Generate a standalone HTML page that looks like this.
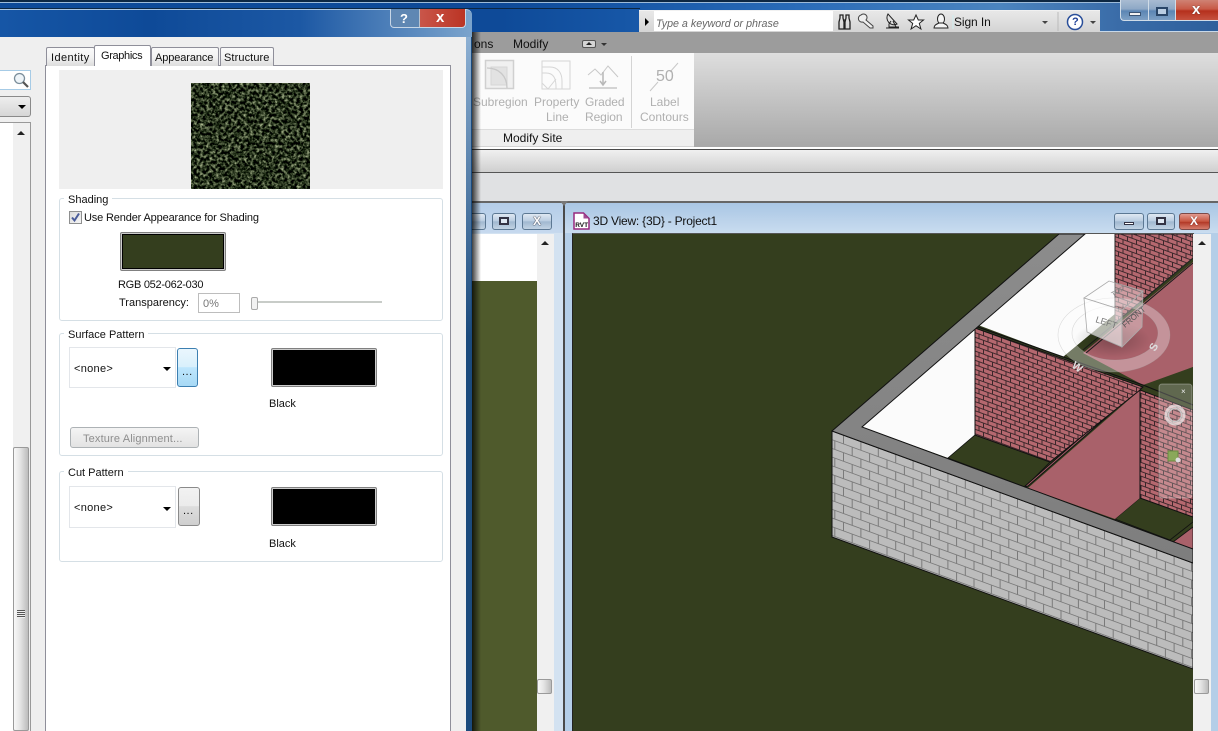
<!DOCTYPE html>
<html><head><meta charset="utf-8"><title>3D View</title>
<style>
html,body{margin:0;padding:0}
body{width:1218px;height:731px;overflow:hidden;position:relative;background:#e0e1e3;font:11px/14px "Liberation Sans",sans-serif;color:#111}
.a{position:absolute;box-sizing:border-box}
.t{position:absolute;white-space:nowrap;line-height:14px}
.g{position:absolute;box-sizing:border-box;left:59px;width:384px;border:1px solid #d5dfe5;border-radius:3px}
.lg{position:absolute;background:#fff;padding:0 4px 0 4px;white-space:nowrap;line-height:14px}
.sw{position:absolute;box-sizing:border-box;width:106px;height:39px;border:1px solid #808080;border-radius:2px;background:#ccc}
.sw i{position:absolute;box-sizing:border-box;left:1px;top:1px;right:1px;bottom:1px;display:block;border:1px solid #000}
.cb{position:absolute;box-sizing:border-box;width:107px;background:#fff;border:1px solid #e3e6ea}
.arr{position:absolute;width:0;height:0;border-left:4px solid transparent;border-right:4px solid transparent;border-top:4px solid #000}
.up{position:absolute;width:0;height:0;border-left:4px solid transparent;border-right:4px solid transparent;border-bottom:4px solid #222}
.thumb{position:absolute;box-sizing:border-box;border:1px solid #9a9a9a;border-radius:2px;background:linear-gradient(90deg,#f8f8f8,#e4e4e4 45%,#bcbcbc)}
.wb{position:absolute;box-sizing:border-box;height:17px;border:1px solid #5c7893;border-radius:3px;background:linear-gradient(#dfe8f2,#b9cce0 48%,#9fb7cf 50%,#c2d3e4)}
.wb.c{background:linear-gradient(#e39a8e,#c6543f 50%,#b33a28 55%,#d57c6c);border-color:#7c4a48}
.dis{color:#b0b0b0}
</style></head><body>

<!-- main title bar -->
<div class="a" style="left:0;top:0;width:1218px;height:2px;background:#0d2742"></div>
<div class="a" style="left:0;top:2px;width:1218px;height:1px;background:#9dbbd9"></div>
<div class="a" style="left:0;top:3px;width:1218px;height:29px;background:linear-gradient(90deg,#0e4a98 0,#0e4a98 500px,#1656a6 620px,#2a6cb8 800px,#4b84bf 1000px,#3a6ca8 1120px,#2e5f9c 1218px)"></div>
<div class="a" style="left:0;top:8px;width:640px;height:1px;background:#0d2742"></div>
<div class="a" style="left:1100px;top:31px;width:118px;height:1px;background:#c8d8e8"></div>

<!-- window buttons -->
<div class="a" style="left:1120px;top:0;width:98px;height:21px;border-left:1px solid #d0dce8;border-bottom:1px solid #d0dce8;border-radius:0 0 0 4px;background:linear-gradient(#a8bbd2,#8ea8c6 45%,#5b86b4 55%,#7ea0c4)"></div>
<div class="a" style="left:1148px;top:0;width:1px;height:20px;background:#d0dce8"></div>
<div class="a" style="left:1175px;top:0;width:1px;height:20px;background:#d0dce8"></div>
<div class="a" style="left:1176px;top:0;width:42px;height:21px;border-bottom:1px solid #d0dce8;background:linear-gradient(#cf8274,#c85a47 45%,#b5301d 55%,#c6523f)"></div>
<div class="a" style="left:1129px;top:12px;width:12px;height:4px;background:#f2f2f2;border:1px solid #3a5474"></div>
<div class="a" style="left:1156px;top:7px;width:12px;height:9px;background:#b9cde2;border:2px solid #2a4668"></div>
<div class="t" style="left:1192px;top:2px;font:bold 15px/16px 'Liberation Sans',sans-serif;color:#fff;text-shadow:0 0 1px #333">x</div>

<!-- search bar -->
<div class="a" style="left:639px;top:10px;width:461px;height:22px;background:linear-gradient(#e8e8e8,#d4d4d4);border-top:1px solid #f1f1f1"></div>
<div class="a" style="left:654px;top:11px;width:179px;height:20px;background:#fff"></div>
<div class="a" style="left:645px;top:18px;width:0;height:0;border-left:4px solid #000;border-top:4px solid transparent;border-bottom:4px solid transparent"></div>
<div class="t" style="left:656px;top:17px;font-style:italic;color:#666;font-size:10.7px">Type a keyword or phrase</div>
<svg class="a" style="left:836px;top:10px" width="270" height="22" viewBox="0 0 270 22" fill="none" stroke="#222" stroke-width="1">
 <path d="M4 5h3v3l1 4v7h-5v-7l1-4zM10 5h3v3l1 4v7h-5v-7l1-4zM8 10h1" stroke-width="1.300"/>
 <path d="M25 5a3.500 3.500 0 1 1 5 5l7 6v2h-3l-7-6a3.500 3.500 0 0 1-2-7z" stroke="#444" fill="#eee"/>
 <path d="M52 4a7 7 0 0 0 9 10zM55 11l-2 3v3h10M57 11l3 6M50 18h13"/>
 <path d="M80 5l2.300 5h5.200l-4.200 3.400 1.600 5.600-4.900-3.300-4.900 3.300 1.600-5.600-4.200-3.400h5.200z" fill="#fff"/>
 <ellipse cx="105" cy="9" rx="3.500" ry="5" fill="#f4f4f4"/><path d="M98 18c0-3 3-4 5-5h4c2 1 5 2 5 5z" fill="#f4f4f4"/>
 <path d="M117 5v14" stroke="#cfeef0"/>
 <path d="M222 2v19" stroke="#bbb"/>
 <circle cx="239" cy="12" r="7.500" stroke="#2a4f9a" stroke-width="1.500" fill="#fff"/>
</svg>
<div class="t" style="left:1072px;top:15px;font:bold 11px/14px 'Liberation Sans',sans-serif;color:#1d3f96">?</div>
<div class="t" style="left:954px;top:15px;font-size:12px;letter-spacing:-.1px">Sign In</div>
<div class="a" style="left:1042px;top:21px;border-left:3px solid transparent;border-right:3px solid transparent;border-top:3px solid #444;width:0;height:0"></div>
<div class="a" style="left:1090px;top:21px;border-left:3px solid transparent;border-right:3px solid transparent;border-top:3px solid #444;width:0;height:0"></div>

<!-- ribbon -->
<div class="a" style="left:472px;top:32px;width:746px;height:21px;background:#9c9c9c"></div>
<div class="t" style="left:474px;top:37px;font-size:12px">ons</div>
<div class="t" style="left:513px;top:37px;font-size:12px">Modify</div>
<div class="a" style="left:582px;top:40px;width:14px;height:8px;background:#d5d5d5;border:1px solid #555;border-radius:2px"></div>
<div class="a" style="left:586px;top:42px;width:0;height:0;border-left:3px solid transparent;border-right:3px solid transparent;border-bottom:3px solid #222"></div>
<div class="a" style="left:601px;top:43px;width:0;height:0;border-left:3px solid transparent;border-right:3px solid transparent;border-top:3px solid #333"></div>

<div class="a" style="left:472px;top:53px;width:222px;height:76px;background:#fbfbfb"></div>
<div class="a" style="left:472px;top:129px;width:222px;height:18px;background:#efefef;border-top:1px solid #dcdcdc;border-bottom:1px solid #d4d4d4"></div>
<div class="a" style="left:694px;top:53px;width:524px;height:94px;background:linear-gradient(#dedede,#a8a8a8)"></div>
<div class="a" style="left:631px;top:56px;width:1px;height:72px;background:#d4d4d4"></div>
<svg class="a" style="left:472px;top:53px" width="222" height="76" viewBox="0 0 222 76" fill="none" stroke="#d6d6d6" stroke-width="1">
 <rect x="13.500" y="7.500" width="28" height="28" fill="#f0f0f0" stroke="#d0d0d0" stroke-width="1.500"/>
 <path d="M19 14h16v18h-16z" fill="#e2e2e2"/><path d="M15 15c12 0 20 8 20 20" stroke="#c8c8c8" stroke-width="1.300"/>
 <path d="M70 8h28v28h-28zM70 14h8c8 0 12 6 12 14v8M70 20h4c8 0 10 6 10 14v2M70 30l6 6l8-10"/>
 <path d="M116 22l7-6 6 6 7-9 10 11" stroke="#c8c8c8"/><path d="M131 19v12M128 28l3 4 3-4" stroke="#b8b8b8" stroke-width="1.500"/><path d="M117 35h28" stroke="#d4d4d4" stroke-width="2"/>
 <path d="M178 38l8-9M198 19l8-9" stroke="#c8c8c8"/>
</svg>
<div class="t dis" style="left:656px;top:68px;font-size:16px;line-height:18px">50</div>
<div class="t dis" style="left:473px;top:95px;font-size:12px">Subregion</div>
<div class="t dis" style="left:534px;top:95px;font-size:12px">Property</div>
<div class="t dis" style="left:546px;top:110px;font-size:12px">Line</div>
<div class="t dis" style="left:585px;top:95px;font-size:12px;letter-spacing:-.1px">Graded</div>
<div class="t dis" style="left:585px;top:110px;font-size:12px;letter-spacing:-.1px">Region</div>
<div class="t dis" style="left:650px;top:95px;font-size:12px">Label</div>
<div class="t dis" style="left:640px;top:110px;font-size:12px">Contours</div>
<div class="t" style="left:503px;top:131px;font-size:12px">Modify Site</div>

<div class="a" style="left:472px;top:147px;width:746px;height:2px;background:#fff"></div>
<div class="a" style="left:472px;top:149px;width:746px;height:1px;background:#4a4a4a"></div>
<div class="a" style="left:472px;top:150px;width:746px;height:22px;background:linear-gradient(#f0f0f0,#cfcfcf)"></div>
<div class="a" style="left:472px;top:172px;width:746px;height:1px;background:#555"></div>
<div class="a" style="left:472px;top:173px;width:746px;height:28px;background:#e0e1e3"></div>
<div class="a" style="left:472px;top:201px;width:746px;height:2px;background:#666"></div>

<!-- left view window -->
<div class="a" style="left:472px;top:203px;width:91px;height:528px;background:linear-gradient(#b4cde8,#c6d9ee 30px,#d3e2f1 30px)"></div>
<div class="a" style="left:472px;top:234px;width:65px;height:47px;background:#fff"></div>
<div class="a" style="left:472px;top:281px;width:65px;height:450px;background:#4f5a2c"></div>
<div class="a" style="left:537px;top:234px;width:17px;height:497px;background:#f0f0f0"></div>
<div class="up" style="left:541px;top:241px"></div>
<div class="thumb" style="left:537px;top:679px;width:15px;height:15px"></div>
<div class="wb" style="left:472px;top:213px;width:14px;border-left:0;border-radius:0 3px 3px 0"></div>
<div class="wb" style="left:492px;top:213px;width:24px"></div>
<div class="a" style="left:499px;top:217px;width:10px;height:8px;border:2px solid #334;background:#dfe8f2"></div>
<div class="wb" style="left:522px;top:213px;width:30px"></div>
<div class="t" style="left:533px;top:214px;font-size:12px;font-weight:bold;color:#fff;text-shadow:0 0 1px #223,0 0 1px #223">X</div>

<!-- 3D window frame -->
<div class="a" style="left:563px;top:203px;width:655px;height:528px;background:#b4cee8"></div>
<div class="a" style="left:563px;top:203px;width:655px;height:30px;background:linear-gradient(#a9c6e4,#c9dcef)"></div>
<div class="a" style="left:563px;top:203px;width:2px;height:528px;background:#4a4a4a"></div>
<div class="a" style="left:560px;top:201px;width:0;height:0;border-left:4px solid transparent;border-right:4px solid transparent;border-top:5px solid #777"></div>
<svg class="a" style="left:573px;top:212px" width="17" height="18" viewBox="0 0 17 18"><path d="M1 1h9.500l5.500 5.500v10.500h-15z" fill="#fff" stroke="#97297e" stroke-width="1.500"/><path d="M10.500 1.500l5 5h-5z" fill="#a04a90"/><text x="2.200" y="15" font-family="Liberation Sans" font-size="6.500" font-weight="bold" fill="#111">RVT</text></svg>
<div class="t" style="left:593px;top:214px;font-size:12px;letter-spacing:-.22px">3D View: {3D} - Project1</div>
<div class="wb" style="left:1114px;top:213px;width:30px"></div>
<div class="a" style="left:1124px;top:222px;width:10px;height:3px;background:#fff;border:1px solid #334"></div>
<div class="wb" style="left:1147px;top:213px;width:28px"></div>
<div class="a" style="left:1156px;top:217px;width:10px;height:8px;border:2px solid #334;background:#dfe8f2"></div>
<div class="wb c" style="left:1179px;top:213px;width:31px"></div>
<div class="t" style="left:1190px;top:214px;font-size:12px;font-weight:bold;color:#fff;text-shadow:0 0 1px #522">X</div>

<div class="a" style="left:572px;top:233px;width:622px;height:498px;background:#343e1e;border-left:1px solid #222;border-top:1px solid #555"></div>
<div class="a" style="left:1193px;top:234px;width:18px;height:497px;background:#f0f0f0"></div>
<div class="up" style="left:1198px;top:241px"></div>
<div class="thumb" style="left:1194px;top:679px;width:15px;height:15px"></div>

<!-- 3D scene -->
<svg class="a" style="left:0;top:0" width="1218" height="731" viewBox="0 0 1218 731">
<defs>
 <clipPath id="vp"><rect x="573" y="234" width="620" height="497"/></clipPath>
 <clipPath id="wf"><polygon points="832,431 1193,563 1193,669 832,537"/></clipPath>
 <clipPath id="wp"><polygon points="975,328 1143,387 1140,390 1050,462 975,435"/><polygon points="1140,390 1193,410 1193,517 1140,498"/><polygon points="1115,234 1193,234 1193,258 1115,323"/></clipPath>
 <g id="pk" fill="none" stroke="#3c272b">
  <path stroke-width="1" d="M-10 0h230m-230 4.600h230m-230 4.600h230m-230 4.600h230m-230 4.600h230m-230 4.600h230m-230 4.600h230m-230 4.600h230"/>
  <path stroke-width="4.600" stroke-dasharray="1 8" d="M-10 2.300h230m-230 9.200h230m-230 9.200h230m-230 9.200h230"/>
  <path stroke-width="4.600" stroke-dasharray="1 8" stroke-dashoffset="4.500" d="M-10 6.900h230m-230 9.200h230m-230 9.200h230m-230 9.200h230"/>
 </g>
 <linearGradient id="par" x1="0" y1="0" x2="0" y2="1"><stop offset="0" stop-color="#8c8c8c"/><stop offset="1" stop-color="#7e7e7e"/></linearGradient>
 <radialGradient id="cs"><stop offset="0" stop-color="#000" stop-opacity=".25"/><stop offset="1" stop-color="#000" stop-opacity="0"/></radialGradient>
</defs>
<g clip-path="url(#vp)">
 <!-- white floors -->
 <polygon points="862,427 975,328 975,435 948,458" fill="#fbfbfb"/>
 <polygon points="978,325 1085,234 1115,234 1115,314 1063,357" fill="#fbfbfb"/>
 <polygon points="1063,357 1115,314 1115,323 1083,351 1068,360" fill="#343e1e"/>
 <!-- pink floor upper -->
 <polygon points="1193,262 1083,353 1143,385 1193,367" fill="#a9616a"/>
 <polygon points="1143,387 1193,367 1193,410" fill="#343e1e"/>
 <path d="M1193,258 L1083,350 M1193,263 L1086,353" stroke="#1a1a1a" stroke-width="1" fill="none"/>
 <!-- lower green -->
 <polygon points="975,435 1050,462 1025,487 948,458" fill="#343e1e" stroke="#111" stroke-width=".8"/>
 <polygon points="1140,498 1193,517 1193,522 1170,540 1115,519" fill="#343e1e" stroke="#111" stroke-width=".8"/>
 <!-- pink lower floor -->
 <polygon points="1140,390 1140,498 1115,519 1028,488" fill="#a9616a"/>
 <path d="M1140,388 L1028,486 L1024,487 L1137,388z" fill="#a9616a" stroke="#111" stroke-width="1"/>
 <!-- pink bricks -->
 <g clip-path="url(#wp)">
  <rect x="965" y="230" width="230" height="300" fill="#b5686f"/>
  <g transform="translate(975 328) skewY(20.100)">
   <use href="#pk" y="-184"/><use href="#pk" y="-147.200"/><use href="#pk" y="-110.400"/><use href="#pk" y="-73.600"/><use href="#pk" y="-36.800"/><use href="#pk" y="0"/><use href="#pk" y="36.800"/><use href="#pk" y="73.600"/><use href="#pk" y="110.400"/>
  </g>
 </g>
 <polygon points="975,328 1143,387 1140,390 1050,462 975,435" fill="none" stroke="#111"/>
 <polygon points="1140,390 1193,410 1193,517 1140,498" fill="none" stroke="#111"/>
 <polygon points="1115,234 1193,234 1193,258 1115,323" fill="none" stroke="#222"/>
 <path d="M975,326 L1143,385 L1193,405" stroke="#111" stroke-width="1.200" fill="none"/>
 <polygon points="1193,527 1173,542 1193,549" fill="#a9616a" stroke="#111" stroke-width=".8"/>
 <!-- front wall -->
 <g clip-path="url(#wf)">
  <rect x="832" y="425" width="362" height="250" fill="#bcbcbc"/>
  <g transform="translate(832 431) skewY(20.100)" fill="none" stroke="#7a7a7a">
   <path stroke-width=".9" d="M0 0h361m-361 8.700h361m-361 8.700h361m-361 8.700h361m-361 8.700h361m-361 8.700h361m-361 8.700h361m-361 8.700h361m-361 8.700h361m-361 8.700h361m-361 8.700h361m-361 8.700h361m-361 8.700h361"/>
   <path stroke-width="8.700" stroke-dasharray="1 16.400" stroke-dashoffset="6.400" d="M0 4.350h361m-361 17.400h361m-361 17.400h361m-361 17.400h361m-361 17.400h361m-361 17.400h361"/>
   <path stroke-width="8.700" stroke-dasharray="1 16.400" stroke-dashoffset="15.100" d="M0 13.050h361m-361 17.400h361m-361 17.400h361m-361 17.400h361m-361 17.400h361m-361 17.400h361"/>
  </g>
 </g>
 <polygon points="832,431 1193,563 1193,669 832,537" fill="none" stroke="#111"/>
 <!-- parapet -->
 <polygon points="832,431 1059,234 1085,234 862,427 1193,549 1193,563" fill="url(#par)" stroke="#111" stroke-width="1"/>
 <!-- ViewCube -->
 <ellipse cx="1112" cy="340" rx="38" ry="18" fill="url(#cs)"/>
 <path fill-rule="evenodd" d="M1058 335a56 37 0 1 0 112 0a56 37 0 1 0-112 0zM1072 333a43 27 0 1 0 86 0a43 27 0 1 0-86 0z" fill="#fff" fill-opacity=".32" stroke="#aaa" stroke-opacity=".4" stroke-width=".6"/>
 <path d="M1084,298 L1109,281 L1143,291 L1122,310z" fill="#fff" fill-opacity=".35" stroke="#aaa" stroke-width=".8"/>
 <path d="M1084,298 L1122,310 L1122,347 L1087,332z" fill="#fff" fill-opacity=".65" stroke="#aaa" stroke-width=".8"/>
 <path d="M1122,310 L1143,291 L1142,327 L1122,347z" fill="#fff" fill-opacity=".35" stroke="#aaa" stroke-width=".8"/>
 <text x="1095" y="322" font-family="Liberation Sans" font-size="9" fill="#777" transform="rotate(18 1095 322)">LEFT</text>
 <text x="1125" y="328" font-family="Liberation Sans" font-size="8" fill="#555" transform="rotate(-40 1125 328)">FRONT</text>
 <text x="1113" y="297" font-family="Liberation Sans" font-size="7" fill="#888" transform="rotate(-30 1113 297)">TOP</text>
 <text x="1071" y="367" font-family="Liberation Sans" font-size="11" font-weight="bold" fill="#ddd" transform="rotate(35 1071 367)">W</text>
 <text x="1155" y="352" font-family="Liberation Sans" font-size="11" font-weight="bold" fill="#ddd" transform="rotate(-60 1155 352)">S</text>
 <!-- steering wheel -->
 <rect x="1159" y="384" width="33" height="114" rx="3" fill="#fff" fill-opacity=".22" stroke="#fff" stroke-opacity=".3"/>
 <text x="1181" y="394" font-family="Liberation Sans" font-size="8" fill="#eee">×</text>
 <circle cx="1175" cy="415" r="6.500" fill="none" stroke="#c8c8c8" stroke-width="1.500"/>
 <circle cx="1175" cy="415" r="9" fill="none" stroke="#eee" stroke-opacity=".7" stroke-width="3"/>
 <rect x="1168" y="451" width="10" height="10" fill="#8aa85a" stroke="#6b8a42"/>
 <circle cx="1178" cy="460" r="2.500" fill="#ddd"/>
</g>
</svg>

<!-- dialog shadow -->
<div class="a" style="left:472px;top:32px;width:9px;height:699px;background:linear-gradient(90deg,rgba(0,0,0,.75),rgba(0,0,0,0))"></div>

<!-- dialog -->
<div class="a" style="left:0;top:9px;width:472px;height:722px;background:#1b4a7c;border-radius:0 6px 0 0"></div>
<div class="a" style="left:0;top:9px;width:472px;height:28px;border-radius:0 6px 0 0;border-top:1px solid #a9c6e4;background:linear-gradient(90deg,#1656a6,#0e4a98 150px,#1c58a4 300px,#7aa3cc 470px)"></div>
<div class="a" style="left:466px;top:37px;width:5px;height:694px;background:linear-gradient(#8db0d3,#1b4a7c 300px)"></div>
<div class="a" style="left:390px;top:9px;width:76px;height:19px;border:1px solid #c7d6e6;border-top:0;border-radius:0 0 4px 4px;background:linear-gradient(90deg,#5f87b3 0,#5f87b3 28px,#b8c3cf 28px,#b8c3cf 29px,#c9564a 29px,#bb3424 100%)"></div>
<div class="t" style="left:400px;top:11px;font:bold 13px/15px 'Liberation Sans',sans-serif;color:#fff">?</div>
<div class="t" style="left:436px;top:9px;font:bold 15px/17px 'Liberation Sans',sans-serif;color:#fff">x</div>
<div class="a" style="left:0;top:37px;width:466px;height:694px;background:#efefef"></div>

<!-- left column -->
<div class="a" style="left:0;top:70px;width:31px;height:20px;background:#fff;border:1px solid #a6cbe6;border-left:0"></div>
<svg class="a" style="left:12px;top:71px" width="18" height="18" viewBox="0 0 18 18" fill="none"><circle cx="7.500" cy="7.500" r="5" fill="#eef4f8" stroke="#7b8e9b" stroke-width="1.300"/><path d="M11 11l5 5" stroke="#555" stroke-width="2.200"/></svg>
<div class="a" style="left:0;top:96px;width:31px;height:21px;background:linear-gradient(#eee,#d6d6d6);border:1px solid #8a8a8a;border-left:0;border-radius:0 3px 3px 0"></div>
<div class="arr" style="left:18px;top:105px"></div>
<div class="a" style="left:0;top:122px;width:31px;height:609px;background:#fff;border:1px solid #999;border-left:0;border-bottom:0"></div>
<div class="a" style="left:13px;top:123px;width:17px;height:608px;background:#f0f0f0"></div>
<div class="up" style="left:17px;top:131px"></div>
<div class="thumb" style="left:13px;top:447px;width:16px;height:284px"></div>
<div class="a" style="left:17px;top:610px;width:8px;height:8px;background:repeating-linear-gradient(#555 0,#555 1px,#eee 1px,#eee 2px)"></div>

<!-- tab page -->
<div class="a" style="left:45px;top:65px;width:406px;height:666px;background:#fff;border:1px solid #8f8f9a;border-bottom:0"></div>
<div class="a" style="left:46px;top:47px;width:49px;height:19px;border:1px solid #8f8f9a;border-bottom:0;border-radius:2px 2px 0 0;background:linear-gradient(#fafafa,#f3f3f3 50%,#dcdcdc)"></div>
<div class="a" style="left:151px;top:47px;width:68px;height:19px;border:1px solid #8f8f9a;border-bottom:0;border-radius:2px 2px 0 0;background:linear-gradient(#fafafa,#f3f3f3 50%,#dcdcdc)"></div>
<div class="a" style="left:220px;top:47px;width:54px;height:19px;border:1px solid #8f8f9a;border-bottom:0;border-radius:2px 2px 0 0;background:linear-gradient(#fafafa,#f3f3f3 50%,#dcdcdc)"></div>
<div class="a" style="left:94px;top:45px;width:57px;height:21px;border:1px solid #8f8f9a;border-bottom:0;border-radius:2px 2px 0 0;background:#fff"></div>
<div class="t" style="left:51px;top:51px;letter-spacing:.4px">Identity</div>
<div class="t" style="left:101px;top:49px;letter-spacing:-.35px">Graphics</div>
<div class="t" style="left:155px;top:51px;letter-spacing:-.1px">Appearance</div>
<div class="t" style="left:224px;top:51px;letter-spacing:.1px">Structure</div>

<div class="a" style="left:59px;top:70px;width:384px;height:119px;background:#efefef"></div>
<svg class="a" style="left:191px;top:83px" width="119" height="106" viewBox="0 0 119 106">
 <filter id="nz" x="0" y="0" width="100%" height="100%" color-interpolation-filters="sRGB">
  <feTurbulence type="fractalNoise" baseFrequency=".32" numOctaves="3" seed="7"/>
  <feColorMatrix values="1.500 0 0 0 -.60  1.500 0 0 0 -.55  1.300 0 0 0 -.54  0 0 0 0 1"/>
 </filter>
 <rect width="119" height="106" filter="url(#nz)"/>
</svg>

<!-- Shading -->
<div class="g" style="top:198px;height:123px"></div>
<div class="lg" style="left:64px;top:193px">Shading</div>
<div class="a" style="left:69px;top:211px;width:13px;height:13px;border:1px solid #8e8f8f;background:linear-gradient(135deg,#dcdcdc,#f4f4f4)"></div>
<svg class="a" style="left:69px;top:211px" width="13" height="13" viewBox="0 0 13 13"><path d="M3 6.500l2.500 3L10 2.500" fill="none" stroke="#4a5c9a" stroke-width="2"/></svg>
<div class="t" style="left:84px;top:211px;letter-spacing:-.15px">Use Render Appearance for Shading</div>
<div class="sw" style="left:120px;top:232px"><i style="background:#343e1e"></i></div>
<div class="t" style="left:118px;top:278px;letter-spacing:-.27px">RGB 052-062-030</div>
<div class="t" style="left:119px;top:296px">Transparency:</div>
<div class="a" style="left:198px;top:293px;width:42px;height:20px;border:1px solid #bdbdbd;background:#fff"></div>
<div class="t" style="left:203px;top:297px;color:#777">0%</div>
<div class="a" style="left:257px;top:301px;width:125px;height:2px;background:#c8ccc8"></div>
<div class="a" style="left:251px;top:297px;width:7px;height:13px;border:1px solid #aaa;border-radius:2px;background:#f2f2f2"></div>

<!-- Surface Pattern -->
<div class="g" style="top:333px;height:123px"></div>
<div class="lg" style="left:64px;top:328px">Surface Pattern</div>
<div class="cb" style="left:69px;top:347px;height:41px"></div>
<div class="t" style="left:74px;top:362px;letter-spacing:.3px">&lt;none&gt;</div>
<div class="arr" style="left:163px;top:367px"></div>
<div class="a" style="left:177px;top:348px;width:21px;height:39px;border:1px solid #3c7fb1;border-radius:3px;background:linear-gradient(#eaf6fd,#d9f0fc 48%,#bee6fd 50%,#a7d9f5)"></div>
<div class="t" style="left:182px;top:365px;letter-spacing:.5px">...</div>
<div class="sw" style="left:271px;top:348px"><i style="background:#000"></i></div>
<div class="t" style="left:269px;top:397px">Black</div>
<div class="a" style="left:70px;top:427px;width:129px;height:21px;border:1px solid #adb2b5;border-radius:3px;background:linear-gradient(#f4f4f4,#e3e3e3)"></div>
<div class="t" style="left:83px;top:432px;color:#8e8e8e;letter-spacing:.15px">Texture Alignment...</div>

<!-- Cut Pattern -->
<div class="g" style="top:471px;height:91px"></div>
<div class="lg" style="left:64px;top:466px">Cut Pattern</div>
<div class="cb" style="left:69px;top:486px;height:42px"></div>
<div class="t" style="left:74px;top:501px;letter-spacing:.3px">&lt;none&gt;</div>
<div class="arr" style="left:163px;top:507px"></div>
<div class="a" style="left:178px;top:487px;width:22px;height:39px;border:1px solid #8a8a8a;border-radius:3px;background:linear-gradient(#f2f2f2,#ebebeb 48%,#dddddd 50%,#cfcfcf)"></div>
<div class="t" style="left:183px;top:504px;letter-spacing:.5px">...</div>
<div class="sw" style="left:271px;top:487px"><i style="background:#000"></i></div>
<div class="t" style="left:269px;top:537px">Black</div>

</body></html>
